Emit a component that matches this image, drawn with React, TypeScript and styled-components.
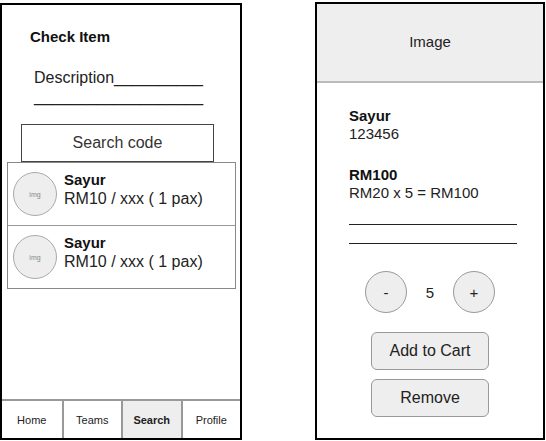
import styled, { createGlobalStyle } from 'styled-components';

const GlobalStyle = createGlobalStyle`
  html, body {
    margin: 0;
    padding: 0;
    background: #fff;
  }
  body {
    font-family: "Liberation Sans", Arial, sans-serif;
    color: #222;
  }
`;

const items = [
  { name: 'Sayur', price: 'RM10 / xxx ( 1 pax)' },
  { name: 'Sayur', price: 'RM10 / xxx ( 1 pax)' },
];

const tabs = ['Home', 'Teams', 'Search', 'Profile'];

function App() {
  return (
    <>
      <GlobalStyle />
      <Page>
        <Phone>
          <Title>Check Item</Title>
          <Description>Description__________</Description>
          <Description>___________________</Description>
          <SearchBox>Search code</SearchBox>
          <List>
            {items.map((item, i) => (
              <Row key={i}>
                <Thumb>img</Thumb>
                <RowText>
                  <Name>{item.name}</Name>
                  <Price>{item.price}</Price>
                </RowText>
              </Row>
            ))}
          </List>
          <TabBar>
            {tabs.map((tab) => (
              <Tab key={tab} $active={tab === 'Search'}>
                {tab}
              </Tab>
            ))}
          </TabBar>
        </Phone>

        <Detail>
          <ImageHeader>Image</ImageHeader>
          <DetailBody>
            <Name>Sayur</Name>
            <Plain>123456</Plain>
            <Name $gap>RM100</Name>
            <Plain>RM20 x 5 = RM100</Plain>
            <Rule $top={22} />
            <Rule $top={18} />
          </DetailBody>
          <Stepper>
            <RoundButton>-</RoundButton>
            <Count>5</Count>
            <RoundButton>+</RoundButton>
          </Stepper>
          <Actions>
            <ActionButton>Add to Cart</ActionButton>
            <ActionButton>Remove</ActionButton>
          </Actions>
        </Detail>
      </Page>
    </>
  );
}

export default App;

const Page = styled.div`
  display: flex;
  align-items: flex-start;
  gap: 73px;
  width: 546px;
  height: 441px;
  padding-top: 2px;
  box-sizing: border-box;
`;

const Phone = styled.div`
  width: 242px;
  height: 437px;
  margin-top: 1px;
  box-sizing: border-box;
  border: 2px solid #000;
  display: flex;
  flex-direction: column;
`;

const Title = styled.h1`
  margin: 23px 0 0 28px;
  font-size: 15px;
  font-weight: 700;
  line-height: 18px;
  color: #111;
`;

const Description = styled.p`
  margin: 23px 0 0 32px;
  font-size: 16px;
  line-height: 18px;
  color: #222;
  & + & {
    margin-top: 1px;
  }
`;

const SearchBox = styled.div`
  margin: 18px 0 0 19px;
  width: 193px;
  height: 38px;
  box-sizing: border-box;
  border: 1px solid #444;
  display: flex;
  align-items: center;
  justify-content: center;
  font-size: 16px;
  color: #333;
`;

const List = styled.div`
  margin: 0 4px 0 5px;
  border: 1px solid #888;
  display: flex;
  flex-direction: column;
`;

const Row = styled.div`
  height: 62px;
  display: flex;
  align-items: center;
  gap: 7px;
  padding-left: 5px;
  & + & {
    border-top: 1px solid #999;
  }
`;

const Thumb = styled.div`
  width: 42px;
  height: 42px;
  border-radius: 50%;
  border: 1px solid #aaa;
  background: #eee;
  display: flex;
  align-items: center;
  justify-content: center;
  font-size: 7px;
  color: #888;
`;

const RowText = styled.div`
  display: flex;
  flex-direction: column;
  margin-top: -8px;
`;

const Name = styled.div<{ $gap?: boolean }>`
  font-size: 15px;
  font-weight: 700;
  line-height: 18px;
  color: #111;
  margin-top: ${({ $gap }) => ($gap ? '23px' : '0')};
`;

const Price = styled.div`
  font-size: 16px;
  line-height: 20px;
  color: #222;
`;

const TabBar = styled.div`
  margin-top: auto;
  height: 37px;
  border-top: 2px solid #999;
  display: grid;
  grid-template-columns: repeat(4, 1fr);
`;

const Tab = styled.div<{ $active?: boolean }>`
  display: flex;
  align-items: center;
  justify-content: center;
  font-size: 11px;
  font-weight: ${({ $active }) => ($active ? 700 : 400)};
  color: #222;
  background: ${({ $active }) => ($active ? '#eee' : '#fff')};
  & + & {
    border-left: 2px solid #999;
  }
`;

const Detail = styled.div`
  width: 230px;
  height: 438px;
  box-sizing: border-box;
  border: 2px solid #000;
  display: flex;
  flex-direction: column;
`;

const ImageHeader = styled.div`
  height: 79px;
  box-sizing: border-box;
  padding-bottom: 3px;
  background: #eee;
  border-bottom: 2px solid #bbb;
  display: flex;
  align-items: center;
  justify-content: center;
  font-size: 15px;
  color: #222;
`;

const DetailBody = styled.div`
  padding: 24px 0 0 32px;
  display: flex;
  flex-direction: column;
`;

const Plain = styled.div`
  font-size: 15px;
  line-height: 18px;
  color: #222;
`;

const Rule = styled.div<{ $top: number }>`
  width: 168px;
  margin-top: ${({ $top }) => $top}px;
  border-top: 1px solid #222;
`;

const Stepper = styled.div`
  display: flex;
  align-items: center;
  justify-content: center;
  gap: 10px;
  margin-top: 27px;
`;

const RoundButton = styled.div`
  width: 42px;
  height: 42px;
  box-sizing: border-box;
  border-radius: 50%;
  border: 1px solid #999;
  background: #eee;
  display: flex;
  align-items: center;
  justify-content: center;
  font-size: 15px;
  color: #222;
`;

const Count = styled.div`
  width: 26px;
  text-align: center;
  font-size: 15px;
  color: #222;
`;

const Actions = styled.div`
  display: flex;
  flex-direction: column;
  align-items: center;
  gap: 9px;
  margin-top: 19px;
`;

const ActionButton = styled.div`
  width: 118px;
  height: 38px;
  box-sizing: border-box;
  border-radius: 6px;
  border: 1px solid #999;
  background: #eee;
  display: flex;
  align-items: center;
  justify-content: center;
  font-size: 16px;
  color: #222;
`;
